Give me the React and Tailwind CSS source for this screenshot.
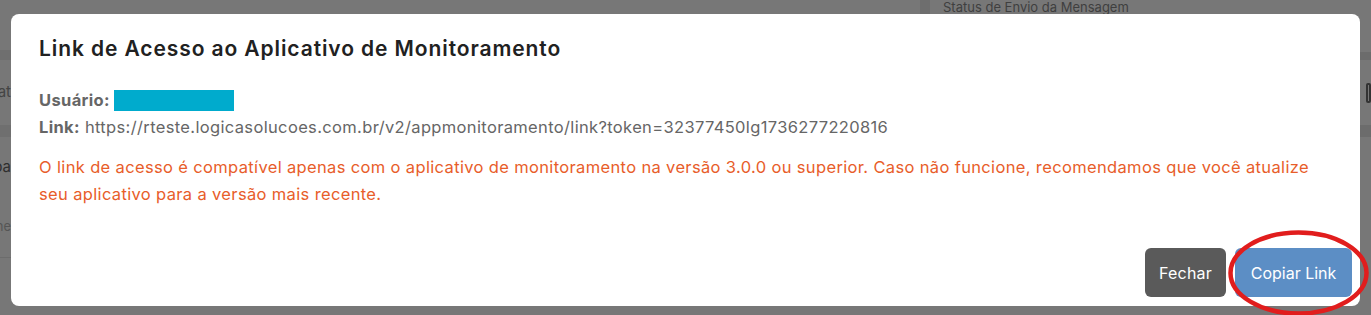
export default function App() {
  return (
    <div
      className="relative w-[1371px] h-[315px] overflow-hidden bg-[#777777]"
      style={{ fontFamily: 'Inter, "Noto Sans", sans-serif' }}
    >
      {/* Dimmed page behind the dialog */}
      <div className="flex h-full">
        <div className="w-[11px] flex flex-col text-[15px] text-[#2e2e2e]">
          <div className="h-[50px]" />
          <div className="h-[10px] bg-[#6f6f6f]" />
          <div className="h-[65px] flex items-center justify-end text-[#444]">at</div>
          <div className="h-[12px] bg-[#6f6f6f]" />
          <div className="h-[60px] flex items-center justify-end">pa</div>
          <div className="h-[60px] flex items-center justify-end text-[13px] text-[#555]">ne</div>
          <div className="h-px bg-[#6c6c6c]" />
        </div>
        <div className="flex-1 flex">
          <div className="flex-1" />
          <div className="w-[440px] flex">
            <div className="w-[10px] h-[14px] bg-[#6e6e6e]" />
            <div className="pl-[13px] text-[13px] leading-[14px] text-[#3f3f3f]">Status de Envio da Mensagem</div>
          </div>
        </div>
        <div className="w-[11px] flex flex-col">
          <div className="h-[52px]" />
          <div className="h-[8px] bg-[#6c6c6c]" />
          <div className="h-[65px] flex items-center">
            <div className="ml-[6px] w-[8px] h-[20px] border-2 border-[#333] rounded-[2px]" />
          </div>
          <div className="h-[12px] bg-[#6c6c6c]" />
        </div>
      </div>

      {/* Dialog */}
      <div className="absolute left-[11px] top-[14px] w-[1349px] h-[292px] bg-white rounded-[8px] flex flex-col">
        <div className="px-[28px] pt-[21px]">
          <h2 className="text-[21px] leading-[28px] font-semibold tracking-[0.9px] text-[#212121]">
            Link de Acesso ao Aplicativo de Monitoramento
          </h2>
        </div>
        <div className="px-[28px] pt-[24px] text-[16.5px] leading-[27px] tracking-[0.35px] text-[#666]">
          <div className="flex items-center">
            <span className="font-bold">Usuário:</span>
            <span className="ml-[4px] w-[120px] h-[21px] bg-[#00abcd]" />
          </div>
          <div>
            <span className="font-bold">Link:</span>{' '}
            https://rteste.logicasolucoes.com.br/v2/appmonitoramento/link?token=32377450lg1736277220816
          </div>
          <p className="mt-[13px] pr-[20px] text-[#e85d2a]">
            O link de acesso é compatível apenas com o aplicativo de monitoramento na versão 3.0.0 ou superior. Caso não funcione, recomendamos que você atualize seu aplicativo para a versão mais recente.
          </p>
        </div>
        <div className="mt-auto flex justify-end gap-[9px] pr-[8px] pb-[9px]">
          <button className="w-[81px] h-[49px] rounded-[6px] bg-[#5a5a5a] text-white text-[16px] tracking-[0.2px]">Fechar</button>
          <button className="w-[117px] h-[49px] rounded-[6px] bg-[#5c8ec5] text-white text-[16px]">Copiar Link</button>
        </div>
      </div>

      {/* Red highlight */}
      <svg className="absolute left-[1227px] top-[229px]" width="143" height="86" viewBox="0 0 143 86">
        <ellipse cx="71.5" cy="44" rx="68" ry="40.5" fill="none" stroke="#e11d1d" strokeWidth="4.5" />
      </svg>
    </div>
  );
}
